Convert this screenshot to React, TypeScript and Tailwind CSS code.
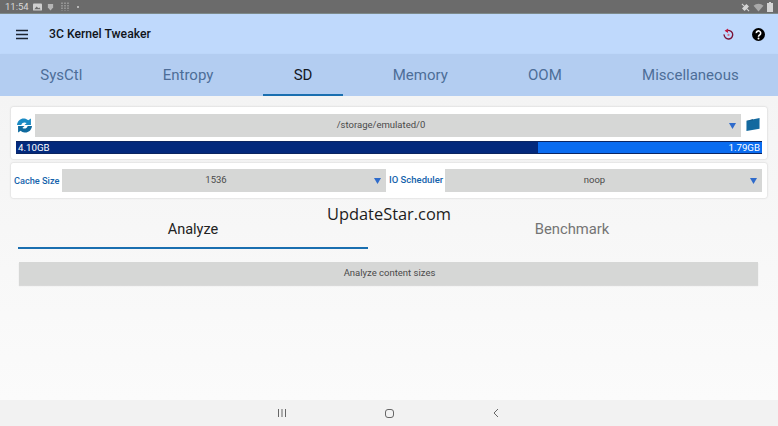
const tabs = ['SysCtl', 'Entropy', 'SD', 'Memory', 'OOM', 'Miscellaneous'];

function Caret() {
    return (
        <svg viewBox="0 0 7 6" className="absolute top-[9px] right-[5px] h-[6px] w-[7px]">
            <path d="M0 0h7L3.500 6z" fill="#2f6bcb" />
        </svg>
    );
}

function Select({ value, className }: { value: string; className: string }) {
    return (
        <div className={`relative flex h-[23px] items-center justify-center bg-[#d6d7d6] text-[9.5px] text-[#4a4a4a] ${className}`}>
            {value}
            <Caret />
        </div>
    );
}

function StatusBar() {
    return (
        <div className="flex h-[14px] items-center justify-between border-b border-[#7d8a8a] bg-[#6b6b6b] px-[5px] pt-[1px] text-[#d8d8d8]">
            <div className="flex items-center">
                <span className="w-[23px] text-[9.5px] leading-none">11:54</span>
                <svg viewBox="0 0 10 8" className="ml-[5px] h-[8px] w-[9px]">
                    <rect width="10" height="8" rx="1" fill="#cfcfcf" />
                    <path d="M1.500 6.500l2.500-3 2 2 1-1 1.500 2z" fill="#6b6b6b" />
                </svg>
                <svg viewBox="0 0 8 9" className="ml-[5px] h-[8px] w-[7px]">
                    <path d="M1 1h6v4L4 8.500 1 5z" fill="#b5b5b5" />
                </svg>
                <svg viewBox="0 0 10 10" className="ml-[6px] h-[10px] w-[10px]">
                    <path d="M2 0.500v8M5 0.500v8M8 0.500v8" stroke="#a8a8a8" strokeWidth="1.300" strokeDasharray="1.500 1" />
                </svg>
                <span className="ml-[7px] h-[2px] w-[2px] rounded-full bg-[#d0d0d0]" />
            </div>
            <div className="flex items-center gap-[3px]">
                <svg viewBox="0 0 10 10" className="h-[9px] w-[9px]">
                    <path d="M1 1l8 8M2 6l4-4 2 2-4 4z" stroke="#d5d5d5" strokeWidth="1.200" fill="#d5d5d5" />
                </svg>
                <svg viewBox="0 0 12 10" className="h-[9px] w-[11px]">
                    <path d="M0.500 3a8 8 0 0 1 11 0L6 9.500z" fill="#a9a9a9" />
                </svg>
                <svg viewBox="0 0 6 10" className="h-[10px] w-[6px]">
                    <path d="M2 0h2v1h2v9H0V1h2z" fill="#d5d5d5" />
                </svg>
            </div>
        </div>
    );
}

export default function App() {
    return (
        <div className="relative flex h-[426px] w-[778px] flex-col overflow-hidden bg-[#fefefe] font-['Roboto',sans-serif]">
            <StatusBar />

            <div className="flex h-[40px] items-center bg-[#bfd9fc] pr-[13px] pl-[15px]">
                <svg viewBox="0 0 15 15" className="h-[15px] w-[15px]">
                    <path d="M1 3.500h12M1 7.500h12M1 11.500h12" stroke="#1c2430" strokeWidth="1.400" />
                </svg>
                <span className="ml-[19px] text-[12.2px] font-medium text-[#10141a]">3C Kernel Tweaker</span>
                <div className="ml-auto flex items-center gap-[18px]">
                    <svg viewBox="0 0 12 13" className="h-[12px] w-[11px]">
                        <path d="M3.200 3.400a4.700 4.700 0 1 1-2 3.500" fill="none" stroke="#7a1236" strokeWidth="1.500" />
                        <path d="M5.500 0.500v5L1.800 3z" fill="#c2183f" />
                        <circle cx="6" cy="7.500" r="1.200" fill="#d86a8a" />
                    </svg>
                    <svg viewBox="0 0 24 24" className="h-[13px] w-[13px]">
                        <circle cx="12" cy="12" r="12" fill="#000" />
                        <path d="M8 9.500a4 4 0 1 1 6.500 3c-1.500 1.200-2.500 1.800-2.500 3.500" fill="none" stroke="#fff" strokeWidth="3" />
                        <circle cx="12" cy="19.500" r="1.800" fill="#fff" />
                    </svg>
                </div>
            </div>

            <div className="flex h-[42px] bg-[#b3cdf1] shadow-[0_1px_2px_rgba(0,0,0,0.12)]">
                {tabs.map((tab) => (
                    <div key={tab} className="relative flex items-center pr-10 pl-[40.300px]">
                        <span className={`text-[15px] ${tab === 'SD' ? 'text-[#14181f]' : 'text-[#4d6d98]'}`}>{tab}</span>
                        {tab === 'SD' && (
                            <div className="absolute bottom-0 left-[9.500px] h-[2px] w-[80px] bg-[#1a6fb0]" />
                        )}
                    </div>
                ))}
            </div>

            <div className="flex h-[304px] flex-col bg-gradient-to-b from-[#f4f4f4] to-[#fbfbfb] px-[11px] pt-[11px]">
                <div className="h-[52px] w-[756px] shrink-0 rounded-[2px] bg-white px-[5px] pt-[6.500px] shadow-[0_0_2px_rgba(0,0,0,0.22)]">
                    <div className="flex items-center">
                        <svg viewBox="1 1 14 14" className="mr-[3px] ml-[1px] h-[15px] w-[15px]">
                            <path d="M1 7.500C1.500 3 5 1 8 1.500c1.500.2 2.500.8 3.500 1.700L14 1.500v6H8l2-1.800C8 4.800 6 5 5 7.500z" fill="#1a8ac4" />
                            <path d="M15 8.500c-.5 4.500-4 6.500-7 6-1.500-.2-2.500-.8-3.500-1.700L2 14.500v-6h6l-2 1.800c2 1 4 .8 5-1.800z" fill="#0f6a9e" />
                        </svg>
                        <Select value="/storage/emulated/0" className="w-[706px] pr-[14px]" />
                        <svg viewBox="0 0 15 15" className="-mt-[2px] ml-[5px] h-[15px] w-[14px]">
                            <path d="M0.500 3.500L14.500 0.500v11.500L0.500 14.500z" fill="#13699f" />
                            <path d="M0.500 3.500l7-1.500v1z" fill="#0c4f7c" />
                        </svg>
                    </div>
                    <div className="mt-[4.500px] flex h-[13px] w-[746px] border-y border-[#0b2560] text-[9.700px] leading-[11px] text-white">
                        <div className="flex w-[522px] items-center bg-[#03297c] pl-[2px]">4.10GB</div>
                        <div className="flex flex-1 items-center justify-end bg-[#0a6cf0] pr-[2px]">1.79GB</div>
                    </div>
                </div>

                <div className="mt-[4px] flex h-[35px] w-[756px] shrink-0 items-center rounded-[2px] bg-white pr-[5px] pl-[3px] shadow-[0_0_2px_rgba(0,0,0,0.22)]">
                    <span className="w-[48px] text-[9.200px] font-medium whitespace-nowrap text-[#1463ac]">Cache Size</span>
                    <Select value="1536" className="w-[324px] pr-[16px]" />
                    <span className="ml-[3px] w-[56px] text-[9.500px] font-medium whitespace-nowrap text-[#1463ac]">IO Scheduler</span>
                    <Select value="noop" className="flex-1 pr-[18px]" />
                </div>

                <div className="relative mt-[16px] ml-[7px] flex h-[35px] w-[740px] shrink-0">
                    <div className="flex w-[350px] items-center justify-center border-b-2 border-[#1a6fb0] pt-[2px] pb-[4px] text-[14.500px] text-[#222]">Analyze</div>
                    <div className="flex flex-1 items-center justify-center pt-[2px] pb-[6px] pl-[18px] text-[14.800px] text-[#747474]">Benchmark</div>
                </div>

                <div className="mt-[13px] ml-[8px] flex h-[23px] w-[739px] shrink-0 items-center justify-center bg-[#d6d7d6] pl-[2px] text-[9.500px] text-[#4a4a4a] shadow-[0_1px_1px_rgba(0,0,0,0.12)]">
                    Analyze content sizes
                </div>
            </div>

            <div className="flex flex-1 flex-col justify-end">
                <div className="flex h-[26px] items-center bg-[#f2f2f2]">
                    <svg viewBox="0 0 10 10" className="ml-[277px] h-[10px] w-[10px]">
                        <path d="M1.500 1v8M5 1v8M8.500 1v8" stroke="#666" strokeWidth="1" />
                    </svg>
                    <div className="ml-[98px] h-[9px] w-[9px] rounded-[3px] border border-[#666]" />
                    <svg viewBox="0 0 8 10" className="ml-[98px] h-[10px] w-[8px]">
                        <path d="M6 1L2 5l4 4" fill="none" stroke="#666" strokeWidth="1" />
                    </svg>
                </div>
            </div>

            <div className="absolute top-[204px] left-[327px] font-['Open_Sans',sans-serif] text-[16.400px] leading-[20px] text-[#1d1d1d]">
                UpdateStar.com
            </div>
        </div>
    );
}
